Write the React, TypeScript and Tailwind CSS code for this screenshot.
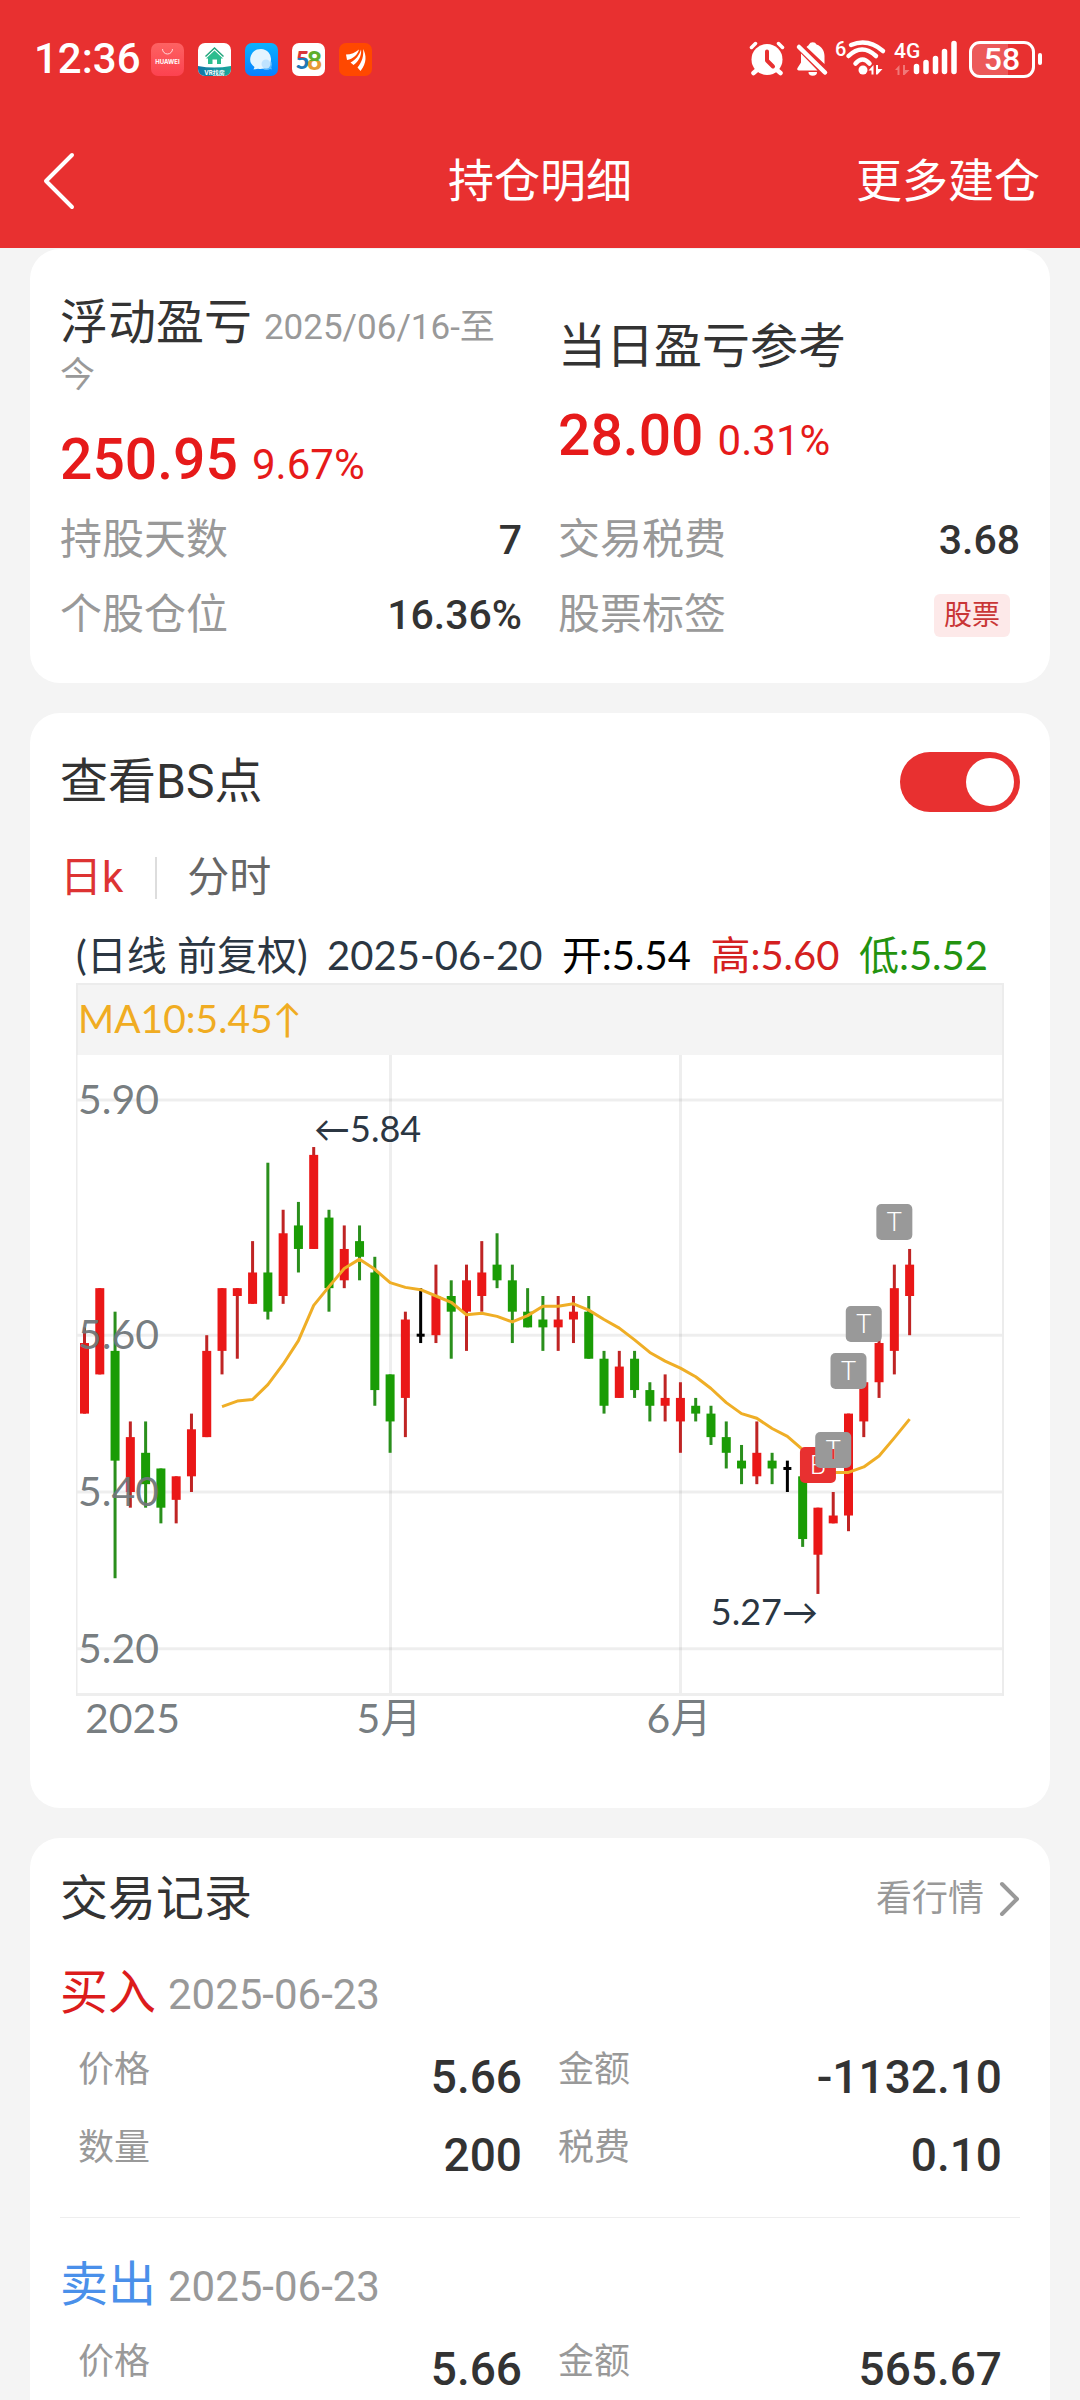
import { useState } from "react";

type Candle = [open: number, close: number, high: number, low: number];
type Marker = { index: number; kind: "B" | "T"; y: number };

const CANDLES: Candle[] = [
  [5.5, 5.59, 5.61, 5.5],
  [5.55, 5.66, 5.66, 5.55],
  [5.58, 5.44, 5.63, 5.29],
  [5.4, 5.47, 5.49, 5.38],
  [5.45, 5.41, 5.49, 5.38],
  [5.43, 5.38, 5.43, 5.36],
  [5.39, 5.42, 5.42, 5.36],
  [5.42, 5.48, 5.5, 5.4],
  [5.47, 5.58, 5.6, 5.47],
  [5.58, 5.66, 5.66, 5.55],
  [5.65, 5.66, 5.66, 5.57],
  [5.64, 5.68, 5.72, 5.64],
  [5.68, 5.63, 5.82, 5.62],
  [5.65, 5.73, 5.76, 5.64],
  [5.74, 5.71, 5.77, 5.68],
  [5.71, 5.83, 5.84, 5.71],
  [5.75, 5.66, 5.76, 5.63],
  [5.67, 5.71, 5.74, 5.66],
  [5.72, 5.7, 5.74, 5.67],
  [5.68, 5.53, 5.7, 5.51],
  [5.55, 5.49, 5.55, 5.45],
  [5.52, 5.62, 5.63, 5.47],
  [5.6, 5.6, 5.66, 5.59],
  [5.6, 5.65, 5.69, 5.59],
  [5.65, 5.63, 5.67, 5.57],
  [5.63, 5.67, 5.69, 5.58],
  [5.65, 5.68, 5.72, 5.63],
  [5.69, 5.67, 5.73, 5.66],
  [5.67, 5.63, 5.69, 5.59],
  [5.63, 5.61, 5.66, 5.61],
  [5.62, 5.61, 5.65, 5.58],
  [5.61, 5.62, 5.65, 5.58],
  [5.62, 5.63, 5.65, 5.59],
  [5.63, 5.57, 5.65, 5.57],
  [5.57, 5.51, 5.58, 5.5],
  [5.52, 5.56, 5.58, 5.52],
  [5.57, 5.53, 5.58, 5.52],
  [5.53, 5.51, 5.54, 5.49],
  [5.51, 5.52, 5.55, 5.49],
  [5.49, 5.52, 5.54, 5.45],
  [5.51, 5.5, 5.52, 5.49],
  [5.5, 5.47, 5.51, 5.46],
  [5.47, 5.45, 5.49, 5.43],
  [5.44, 5.43, 5.46, 5.41],
  [5.42, 5.45, 5.49, 5.41],
  [5.44, 5.43, 5.45, 5.41],
  [5.43, 5.43, 5.44, 5.4],
  [5.42, 5.34, 5.42, 5.33],
  [5.32, 5.38, 5.38, 5.27],
  [5.36, 5.37, 5.4, 5.36],
  [5.37, 5.5, 5.5, 5.35],
  [5.49, 5.54, 5.54, 5.47],
  [5.54, 5.59, 5.6, 5.52],
  [5.58, 5.66, 5.69, 5.55],
  [5.65, 5.69, 5.71, 5.6],
];

const MARKERS: Marker[] = [
  { index: 48, kind: "B", y: 410 },
  { index: 49, kind: "T", y: 395 },
  { index: 50, kind: "T", y: 316 },
  { index: 51, kind: "T", y: 269 },
  { index: 53, kind: "T", y: 167 },
];

const RED = "#ea1717";
const GREEN = "#1a9c05";

const xOf = (i: number) => 8.5 + i * 15.28;
const yOf = (price: number) => 45 + (5.9 - price) * 784;

const MA10 = CANDLES.map((_, i) => {
  if (i < 9) return null;
  const sum = CANDLES.slice(i - 9, i + 1).reduce((acc, c) => acc + c[1], 0);
  return `${xOf(i)},${yOf(sum / 10)}`;
})
  .filter(Boolean)
  .join(" ");

const TRADES = [
  {
    side: "买入",
    color: "text-[#dc1c1c]",
    date: "2025-06-23",
    rows: [
      ["价格", "5.66", "金额", "-1132.10"],
      ["数量", "200", "税费", "0.10"],
    ],
  },
  {
    side: "卖出",
    color: "text-[#4a90ea]",
    date: "2025-06-23",
    rows: [["价格", "5.66", "金额", "565.67"]],
  },
];

function AppIcons() {
  return (
    <div className="flex gap-[14px]">
      <svg className="size-[33px]" viewBox="0 0 33 33">
        <defs>
          <linearGradient id="hw" x1="0" y1="0" x2="0" y2="1">
            <stop offset="0" stopColor="#fd6262" />
            <stop offset="1" stopColor="#fc4250" />
          </linearGradient>
        </defs>
        <rect width="33" height="33" rx="7" fill="url(#hw)" />
        <path d="M11.5 6a5 5 0 0 0 10 0" fill="none" stroke="#ffd9d9" strokeWidth="1" />
        <text x="16.5" y="21" textAnchor="middle" fontSize="6" fontWeight="700" fill="#fff" fontFamily="Inter, sans-serif">HUAWEI</text>
      </svg>
      <svg className="size-[33px]" viewBox="0 0 33 33">
        <defs>
          <clipPath id="vrClip"><rect width="33" height="33" rx="7" /></clipPath>
          <linearGradient id="vrBar" x1="0" y1="0" x2="1" y2="0">
            <stop offset="0" stopColor="#1276a8" />
            <stop offset="1" stopColor="#1ba89a" />
          </linearGradient>
        </defs>
        <g clipPath="url(#vrClip)">
          <rect width="33" height="33" fill="#fff" />
          <path d="M0 23q16 3 33 0v10H0z" fill="url(#vrBar)" />
          <path d="M7.500 13.500 16.500 5l9 8.500" fill="none" stroke="#22a57c" strokeWidth="1.500" />
          <path d="M16.500 7.500 25 15.500h-2V21h-4v-4.500h-4.500V21H10v-5.500H8z" fill="#2bbd8e" />
          <text x="16.500" y="31.500" textAnchor="middle" fontSize="6" fontWeight="700" fill="#fff" fontFamily="Inter, 'Noto Sans CJK SC', sans-serif">VR找房</text>
        </g>
      </svg>
      <svg className="size-[33px]" viewBox="0 0 33 33">
        <defs>
          <linearGradient id="msg" x1="0" y1="0" x2="0" y2="1">
            <stop offset="0" stopColor="#0bb2ff" />
            <stop offset="1" stopColor="#087fff" />
          </linearGradient>
        </defs>
        <rect width="33" height="33" rx="7" fill="url(#msg)" />
        <circle cx="21.500" cy="21.500" r="5.500" fill="#5ab8ff" />
        <path d="M23 25.500l4 1-1.500-4z" fill="#5ab8ff" />
        <path d="M16 6a10.500 10 0 0 0-6.500 18l-1 2.500 4.500-.8A10.500 10 0 1 0 16 6z" fill="#e4f4ff" />
        <circle cx="21" cy="21" r="4.500" fill="#bfe3ff" />
      </svg>
      <svg className="size-[33px]" viewBox="0 0 33 33">
        <defs>
          <linearGradient id="five" x1="0" y1="0" x2="0" y2="1">
            <stop offset=".48" stopColor="#d9363a" />
            <stop offset=".48" stopColor="#1f78b8" />
          </linearGradient>
          <linearGradient id="eight" x1="0" y1="0" x2="0" y2="1">
            <stop offset=".54" stopColor="#5fae2c" />
            <stop offset=".54" stopColor="#e59a34" />
          </linearGradient>
        </defs>
        <rect width="33" height="33" rx="7" fill="#fff" />
        <text x="3.500" y="25.500" fontSize="24" fontWeight="900" fill="url(#five)" fontFamily="Lato, sans-serif">5</text>
        <text x="15" y="26.500" fontSize="26" fontWeight="900" fill="url(#eight)" fontFamily="Lato, sans-serif">8</text>
      </svg>
      <svg className="size-[33px]" viewBox="0 0 33 33">
        <rect width="33" height="33" rx="7" fill="#ff4800" />
        <g fill="#fff">
          <path d="M7 11.500C12 11.500 16.500 9.500 20 6.500c-1 5-6 9.500-12 10.500z" />
          <path d="M11.500 19.500C16.500 17 20.500 12 22 6.500c1 6-3 13-7.500 15.500z" />
          <path d="M18.500 24.500C23 19.500 25 12 24 6c3.500 6 4 14-2.500 22z" />
        </g>
      </svg>
    </div>
  );
}

function StatusIcons() {
  return (
    <div className="flex items-center">
      <svg className="h-[40px] w-[220px] overflow-visible" viewBox="0 0 220 40" fill="#fff" stroke="#fff" strokeLinecap="round">
        {/* alarm */}
        <circle cx="18" cy="20.500" r="15.500" stroke="none" />
        <path d="M2.500 8.500 6.500 4.500M33.500 8.500 29.500 4.500" strokeWidth="3.500" fill="none" />
        <path d="M8 31 4.500 34M28 31l3.500 3" strokeWidth="4.500" fill="none" />
        <path d="M18 12.500v9l6 6" stroke="#e83030" strokeWidth="4" fill="none" strokeLinejoin="round" />
        {/* muted bell */}
        <path d="M52 14.500v9L48.500 29c-.8 1.300 0 2.500 1.500 2.500h18.500z" stroke="none" />
        <path d="M57.500 8c1-1 2-1.500 2.500-2.500a4 3.500 0 0 1 7.500 0c5.500 2 8 6.500 8 11.500v8z" stroke="none" />
        <path d="M50 8 76 33.500" strokeWidth="4.500" fill="none" />
        <path d="M59.500 33h8.500a4 3.500 0 0 1-8.500 0z" stroke="none" />
        {/* wifi */}
        <text x="86" y="16.500" fontSize="20" fontWeight="500" stroke="none" fontFamily="Roboto, sans-serif">6</text>
        <g fill="none" strokeWidth="4.500">
          <path d="M102 6Q119-1 134 12" />
          <path d="M99.500 17Q113 4 127 17" />
          <path d="M106.500 24.500Q113.500 16.500 120.500 24.500" />
        </g>
        <circle cx="114" cy="31" r="4.500" stroke="none" />
        <path d="M119.500 31.500l5-5.500v9.500h-2v-4zM127 26h2v4h4.500l-5 5.500H127z" stroke="none" />
        {/* mobile signal */}
        <text x="145" y="18.500" fontSize="21" fontWeight="500" stroke="none" fontFamily="Roboto, sans-serif">4G</text>
        <path d="M146 31l4.500-5v10h-2v-5zM154 26h2v5h4.500l-5 5H154z" stroke="none" opacity=".35" />
        <path d="M167.500 27.500v5M177 23.500v9M186.500 19.500v13M195.500 12.500v20M205 4.500v28" strokeWidth="5.500" fill="none" />
      </svg>
      <div className="relative flex h-[37px] w-[66px] items-center justify-center overflow-hidden rounded-[11px] border-[3px] border-white">
        <span className="absolute inset-y-0 left-0 w-3/5 bg-white/20" />
        <span className="relative text-[32px] leading-none font-medium">58</span>
      </div>
      <span className="ml-[3px] h-3 w-1 rounded-full bg-white" />
    </div>
  );
}

function KLineChart({ showMarkers }: { showMarkers: boolean }) {
  return (
    <svg className="block w-full" viewBox="0 0 928 693" fontFamily="Lato, 'Noto Sans CJK SC', sans-serif">
      <g stroke="#000" strokeOpacity=".065" strokeWidth="3" fill="none">
        {[5.9, 5.6, 5.4, 5.2].map((p) => (
          <path key={p} d={`M0 ${yOf(p)}H927`} />
        ))}
        <path d="M314.500 0V638M604.500 0V638" />
        <path d="M0 639.500H928" />
      </g>
      <path d="M.5 0V641M927 0V641" stroke="#ececec" strokeWidth="2" />

      {CANDLES.map(([open, close, high, low], i) => {
        const color = open === close ? "#000" : close > open ? RED : GREEN;
        const wick = open === close ? "#000" : close > open ? "#bf2424" : "#2a8f1c";
        const top = yOf(Math.max(open, close));
        const height = Math.max(yOf(Math.min(open, close)) - top, 3);
        const width = open === close ? 8 : 9;
        return (
          <g key={i}>
            <rect x={xOf(i) - 1.5} y={yOf(high)} width={3} height={yOf(low) - yOf(high)} fill={wick} />
            <rect x={xOf(i) - width / 2} y={open === close ? top - 1.5 : top} width={width} height={height} fill={color} />
          </g>
        );
      })}
      <polyline points={MA10} fill="none" stroke="#efae26" strokeWidth="3" strokeLinejoin="round" />

      {/* price and month labels */}
      <g fontSize="41" fill="#6f7679" fillOpacity=".95">
        <text x="2" y="59">5.90</text>
        <text x="2" y="294">5.60</text>
        <text x="2" y="451">5.40</text>
        <text x="2" y="608">5.20</text>
        <text x="9" y="678">2025</text>
        <text x="313" y="678" textAnchor="middle">5月</text>
        <text x="603" y="678" textAnchor="middle">6月</text>
      </g>
      <g fontSize="36" fill="#2b3642">
        <text x="238" y="87">←5.84</text>
        <text x="742" y="570" textAnchor="end">5.27→</text>
      </g>

      {showMarkers &&
        MARKERS.map((m) => (
          <g key={m.index}>
            <rect x={xOf(m.index) - 18} y={m.y - 18} width={36} height={36} rx={5} fill={m.kind === "B" ? "#e83030" : "#999"} />
            <text x={xOf(m.index)} y={m.y + 9} textAnchor="middle" fontSize="26" fontWeight="300" fill="#fff" fontFamily="Roboto, sans-serif">
              {m.kind}
            </text>
          </g>
        ))}
      {showMarkers && <path d={`M${xOf(49)} 394V404`} stroke="#e83030" strokeWidth="2" />}
    </svg>
  );
}

export default function App() {
  const [showBs, setShowBs] = useState(true);
  const [tab, setTab] = useState("日k");

  return (
    <div className="flex h-screen flex-col overflow-hidden bg-[#f4f4f4] font-['Roboto','Noto_Sans_CJK_SC',sans-serif] text-[#333]">
      <header className="shrink-0 bg-[#e83030] text-white">
        <div className="flex h-[118px] items-center justify-between pr-[38px] pl-[34px]">
          <div className="flex items-center gap-[10px]">
            <span className="text-[42px] leading-none font-medium">12:36</span>
            <AppIcons />
          </div>
          <StatusIcons />
        </div>
        <div className="grid h-[130px] grid-cols-3 items-center px-10 pb-1 text-[46px]">
          <button type="button" aria-label="返回" className="justify-self-start">
            <svg className="h-[60px] w-[38px]" viewBox="0 0 38 60" fill="none" stroke="#fff" strokeWidth="4" strokeLinecap="round" strokeLinejoin="round">
              <path d="M32 4 6 30l26 26" />
            </svg>
          </button>
          <h1 className="text-center">持仓明细</h1>
          <button type="button" className="justify-self-end">更多建仓</button>
        </div>
      </header>

      <main className="flex flex-col gap-[30px] px-[30px] pt-px">
        {/* profit summary */}
        <section className="rounded-[30px] bg-white px-[30px] pt-[50px] pb-11">
          <div className="grid grid-cols-2 items-center gap-x-9">
            <div>
              <h2 className="text-5xl leading-[48px]">
                浮动盈亏 <span className="text-[35px] leading-none text-[#999]">2025/06/16-至今</span>
              </h2>
              <p className="mt-[35px] text-[57px] leading-[60px] font-medium text-[#e61a1a]">
                250.95 <span className="text-[42px] leading-none font-normal">9.67%</span>
              </p>
            </div>
            <div>
              <h2 className="text-5xl leading-[48px]">当日盈亏参考</h2>
              <p className="mt-[35px] text-[57px] leading-[60px] font-medium text-[#e61a1a]">
                28.00 <span className="text-[42px] leading-none font-normal">0.31%</span>
              </p>
            </div>
          </div>
          <dl className="mt-[26px] grid grid-cols-2 gap-x-9 gap-y-[27px] text-[42px] leading-[48px]">
            <div className="flex justify-between">
              <dt className="text-[#999]">持股天数</dt>
              <dd className="text-[41px] font-medium">7</dd>
            </div>
            <div className="flex justify-between">
              <dt className="text-[#999]">交易税费</dt>
              <dd className="text-[41px] font-medium">3.68</dd>
            </div>
            <div className="flex justify-between">
              <dt className="text-[#999]">个股仓位</dt>
              <dd className="text-[41px] font-medium">16.36%</dd>
            </div>
            <div className="flex items-center justify-between">
              <dt className="text-[#999]">股票标签</dt>
              <dd className="mr-[10px] rounded-md bg-[#fde9e9] px-[10px] text-[28px] leading-[43px] text-[#c93636]">股票</dd>
            </div>
          </dl>
        </section>

        {/* k-line chart */}
        <section className="rounded-[30px] bg-white px-[30px] pt-[39px] pb-[60px]">
          <div className="flex h-[60px] items-center justify-between">
            <label htmlFor="bs" className="text-5xl">查看BS点</label>
            <input
              id="bs"
              type="checkbox"
              checked={showBs}
              onChange={(e) => setShowBs(e.target.checked)}
              className="flex h-[60px] w-[120px] appearance-none items-center rounded-full bg-gray-300 px-[6px] before:size-12 before:rounded-full before:bg-white checked:justify-end checked:bg-[#e83030]"
            />
          </div>
          <div className="mt-[45px] flex h-[42px] items-center text-[42px] leading-[42px]">
            {["日k", "分时"].map((t) => (
              <button
                key={t}
                type="button"
                onClick={() => setTab(t)}
                className={`border-[#ddd] not-first:pl-[30px] first:border-r-2 first:pr-8 ${tab === t ? "text-[#dd3333]" : "text-[#666]"}`}
              >
                {t}
              </button>
            ))}
          </div>
          <div className="mx-4 mt-8">
            <p className="flex justify-between pr-4 font-['Lato','Noto_Sans_CJK_SC',sans-serif] text-[40px] leading-[48px] whitespace-nowrap text-[#2b3642]">
              <span>(日线 前复权)</span>
              <span>2025-06-20</span>
              <span className="text-black">开:5.54</span>
              <span className="text-[#d42020]">高:5.60</span>
              <span className="text-[#23930f]">低:5.52</span>
            </p>
            <p className="mt-1 h-[72px] border-2 border-b-0 border-[#ececec] bg-[#f4f4f4] font-['Lato','Noto_Sans_CJK_SC',sans-serif] text-[39px] leading-[66px] text-[#f0ac22]">
              MA10:5.45↑
            </p>
            <KLineChart showMarkers={showBs} />
          </div>
        </section>

        {/* trade records */}
        <section className="rounded-[30px] bg-white px-[30px] pt-[37px] pb-[30px]">
          <div className="mb-[3px] flex items-center justify-between leading-[48px]">
            <h2 className="text-5xl leading-[48px]">交易记录</h2>
            <a href="#quote" className="flex items-center gap-[14px] text-4xl leading-[48px] text-[#999]">
              看行情
              <svg className="h-9 w-[22px]" viewBox="0 0 22 36" fill="none" stroke="#999" strokeWidth="4" strokeLinecap="round" strokeLinejoin="round">
                <path d="M4 3l15 15L4 33" />
              </svg>
            </a>
          </div>
          <ul className="divide-y divide-[#eee]">
            {TRADES.map((t) => (
              <li key={t.side} className="pt-[43px] pb-5">
                <h3 className={`text-5xl leading-[48px] ${t.color}`}>
                  {t.side} <span className="text-[42px] leading-none text-[#999]">{t.date}</span>
                </h3>
                <dl className="mt-6 px-[18px]">
                  {t.rows.map(([k1, v1, k2, v2]) => (
                    <div key={k1} className="grid h-[78px] grid-cols-2 gap-x-9">
                      {[[k1, v1], [k2, v2]].map(([k, v]) => (
                        <div key={k} className="flex items-start justify-between">
                          <dt className="text-4xl leading-[58px] text-[#999]">{k}</dt>
                          <dd className="text-[46px] leading-[72px] font-medium">{v}</dd>
                        </div>
                      ))}
                    </div>
                  ))}
                </dl>
              </li>
            ))}
          </ul>
        </section>
      </main>
    </div>
  );
}
